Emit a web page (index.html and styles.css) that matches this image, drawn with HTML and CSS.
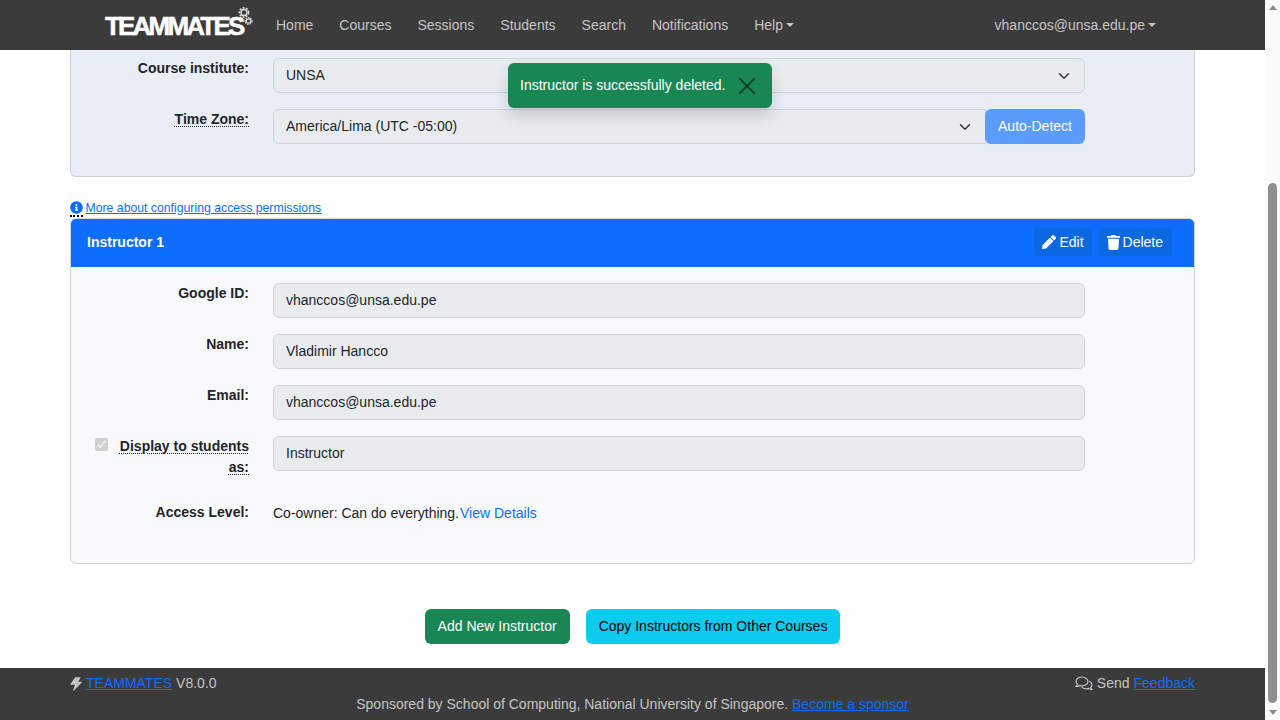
FILE: index.html
```html
<!DOCTYPE html>
<html lang="en">
<head>
  <meta charset="UTF-8">
  <meta name="viewport" content="width=device-width, initial-scale=1.0">
  <title>TEAMMATES - Edit Course</title>
  <link rel="stylesheet" href="styles.css">
</head>
<body>
  <div class="page">
    <nav class="navbar">
      <a class="brand" href="#">
        <span class="brand-text">TEAMMATES</span>
        <svg class="brand-gears" viewBox="0 0 18 22" width="18" height="22">
          <circle class="gear-teeth" cx="6" cy="6.500" r="4.600" />
          <circle class="gear-ring" cx="6" cy="6.500" r="3" />
          <circle class="gear-teeth small" cx="10.500" cy="15" r="3.400" />
          <circle class="gear-ring small" cx="10.500" cy="15" r="2.200" />
        </svg>
      </a>
      <ul class="nav-links">
        <li><a href="#">Home</a></li>
        <li><a href="#">Courses</a></li>
        <li><a href="#">Sessions</a></li>
        <li><a href="#">Students</a></li>
        <li><a href="#">Search</a></li>
        <li><a href="#">Notifications</a></li>
        <li><a class="caret" href="#">Help</a></li>
      </ul>
      <a class="nav-user caret" href="#">vhanccos@unsa.edu.pe</a>
    </nav>

    <main class="content">
      <section class="course-panel">
        <div class="form-row">
          <label class="row-label">Course institute:</label>
          <select class="field" disabled><option>UNSA</option></select>
        </div>
        <div class="form-row">
          <label class="row-label"><span class="hint">Time Zone:</span></label>
          <div class="input-group">
            <select class="field" disabled><option>America/Lima (UTC -05:00)</option></select>
            <button class="btn btn-detect" type="button" disabled>Auto-Detect</button>
          </div>
        </div>
      </section>

      <p class="help-line">
        <span class="info-wrap">
          <svg class="info-icon" viewBox="0 0 512 512" width="13" height="13"><path d="M256 8C119.043 8 8 119.083 8 256c0 136.997 111.043 248 248 248s248-111.003 248-248C504 119.083 392.957 8 256 8zm0 110c23.196 0 42 18.804 42 42s-18.804 42-42 42-42-18.804-42-42 18.804-42 42-42zm56 254c0 6.627-5.373 12-12 12h-88c-6.627 0-12-5.373-12-12v-24c0-6.627 5.373-12 12-12h12v-64h-12c-6.627 0-12-5.373-12-12v-24c0-6.627 5.373-12 12-12h64c6.627 0 12 5.373 12 12v100h12c6.627 0 12 5.373 12 12v24z"/></svg>
        </span>
        <a href="#">More about configuring access permissions</a>
      </p>

      <section class="instructor-card">
        <header class="card-head">
          <strong>Instructor 1</strong>
          <div class="card-actions">
            <button class="btn btn-head" type="button">
              <svg viewBox="0 0 512 512" width="14" height="14"><path d="M497.9 142.1l-46.1 46.1c-4.7 4.7-12.3 4.7-17 0l-111-111c-4.7-4.7-4.7-12.3 0-17l46.1-46.1c18.7-18.7 49.1-18.7 67.9 0l60.1 60.1c18.8 18.7 18.8 49.1 0 67.9zM284.2 99.8L21.6 362.4.4 483.9c-2.9 16.4 11.4 30.6 27.8 27.8l121.5-21.3 262.6-262.6c4.7-4.7 4.7-12.3 0-17l-111-111c-4.8-4.7-12.4-4.7-17.1 0z"/></svg>
              Edit
            </button>
            <button class="btn btn-head btn-delete" type="button">
              <svg viewBox="0 0 448 512" width="13" height="15"><path d="M432 32H312l-9.4-18.7A24 24 0 0 0 281.1 0H166.8a23.72 23.72 0 0 0-21.4 13.3L136 32H16A16 16 0 0 0 0 48v32a16 16 0 0 0 16 16h416a16 16 0 0 0 16-16V48a16 16 0 0 0-16-16zM53.2 467a48 48 0 0 0 47.9 45h245.8a48 48 0 0 0 47.9-45L416 128H32z"/></svg>
              Delete
            </button>
          </div>
        </header>
        <div class="card-body">
          <div class="form-row">
            <label class="row-label">Google ID:</label>
            <input class="field" type="text" value="vhanccos@unsa.edu.pe" disabled>
          </div>
          <div class="form-row">
            <label class="row-label">Name:</label>
            <input class="field" type="text" value="Vladimir Hancco" disabled>
          </div>
          <div class="form-row">
            <label class="row-label">Email:</label>
            <input class="field" type="text" value="vhanccos@unsa.edu.pe" disabled>
          </div>
          <div class="form-row">
            <label class="row-label row-check">
              <input class="check" type="checkbox" checked disabled>
              <span class="check-text"><span class="hint">Display to students as:</span></span>
            </label>
            <input class="field" type="text" value="Instructor" disabled>
          </div>
          <div class="form-row row-access">
            <label class="row-label">Access Level:</label>
            <div class="access-text">Co-owner: Can do everything.<a href="#">View Details</a></div>
          </div>
        </div>
      </section>

      <div class="page-actions">
        <button class="btn btn-green" type="button">Add New Instructor</button>
        <button class="btn btn-cyan" type="button">Copy Instructors from Other Courses</button>
      </div>
    </main>

    <footer class="footer">
      <div class="footer-top">
        <div class="footer-left">
          <svg viewBox="0 0 12 14" width="12" height="14"><path d="M5.200 0.300h5.600L8.200 4.800h3.300c.4 0 .6.400.3.700L4 13.600c-.4.400-1 0-.8-.5L5 7.800H1.300c-.6 0-1-.5-.7-1z"/></svg>
          <a href="#">TEAMMATES</a> V8.0.0
        </div>
        <div class="footer-right">
          <svg class="chat-icon" viewBox="0 0 18 15" width="18" height="15">
            <path d="M7 1C3.700 1 1 3 1 5.500c0 1.100.5 2.100 1.400 2.900C2.100 9.300 1.500 10 1 10.500c1.300 0 2.600-.5 3.500-1.100.8.300 1.600.4 2.500.4 3.300 0 6-2 6-4.300S10.300 1 7 1z"/>
            <path d="M14.300 5.200c1.600.7 2.700 2 2.700 3.500 0 1-.5 2-1.400 2.700.2.800.8 1.500 1.300 2-1.300 0-2.500-.4-3.400-1-.8.300-1.600.4-2.500.4-1.800 0-3.400-.6-4.400-1.600"/>
          </svg>
          Send <a href="#">Feedback</a>
        </div>
      </div>
      <div class="footer-sponsor">Sponsored by School of Computing, National University of Singapore. <a href="#">Become a sponsor</a></div>
    </footer>

    <div class="toast">
      <span>Instructor is successfully deleted.</span>
      <svg class="toast-close" viewBox="0 0 16 16" width="18" height="18"><path d="M1 1l14 14M15 1L1 15"/></svg>
    </div>
  </div>

  <div class="scrollbar">
    <span class="arrow arrow-up"></span>
    <div class="track"><div class="thumb"></div></div>
    <span class="arrow arrow-down"></span>
  </div>
</body>
</html>
```

FILE: styles.css
```css
* { box-sizing: border-box; }
html, body { height: 100%; }
body {
  margin: 0; display: flex; overflow: hidden;
  font-family: "Liberation Sans", Arial, sans-serif;
  font-size: 14px; line-height: 21px; color: #212529; background: #fff;
}
a { color: #0d6efd; }

.page {
  position: relative; width: 1265px; height: 720px;
  display: flex; flex-direction: column; overflow: hidden;
}

/* navbar */
.navbar {
  height: 50px; flex: none; display: flex; align-items: center;
  padding: 0 109px 0 105px; background: #3b3b3b;
}
.brand {
  position: relative; display: block; width: 171px;
  height: 50px; text-decoration: none;
}
.brand-text {
  display: block; margin-top: 13px; font-size: 26px; line-height: 26px; font-weight: 700;
  letter-spacing: -2.800px; color: #fff; -webkit-text-stroke: 0.5px #fff;
}
.brand-gears { position: absolute; left: 133px; top: 6px; }
.gear-teeth { fill: none; stroke: #dcdcdc; stroke-width: 1.600; stroke-dasharray: 2 1.300; }
.gear-ring { fill: none; stroke: #dcdcdc; stroke-width: 1.400; }
.gear-teeth.small { stroke-dasharray: 1.500 1; stroke-width: 1.300; }
.gear-ring.small { stroke-width: 1.200; }
.nav-links { display: flex; gap: 26px; margin: 0; padding: 0; list-style: none; }
.navbar a { color: #c4c4c4; text-decoration: none; }
.nav-user { margin-left: auto; }
.caret::after {
  content: ""; display: inline-block; margin-left: 3px; vertical-align: 3px;
  border-top: 4px solid; border-left: 4px solid transparent; border-right: 4px solid transparent;
}

/* main column */
.content { flex: 1; padding: 0 70px; min-height: 0; }
.course-panel {
  height: 127px; padding: 8px 0 0; background: #e9edf6;
  border: 1px solid #ced4da; border-top: 0; border-radius: 0 0 6px 6px;
}
.form-row {
  display: grid; grid-template-columns: 178px 812px; column-gap: 24px;
  margin-bottom: 16px;
}
.row-label { font-weight: 700; text-align: right; }
.hint { text-decoration: underline dotted #212529 1px; text-underline-offset: 2px; }
.field {
  width: 100%; height: 35px; padding: 5px 12px 7px; font: inherit; color: #212529; opacity: 1;
  background-color: #e9ecef; border: 1px solid #ced4da; border-radius: 6px;
}
select.field {
  appearance: none; padding: 6px 36px 6px 12px;
  background-image: url("data:image/svg+xml,%3csvg xmlns='http://www.w3.org/2000/svg' viewBox='0 0 16 16'%3e%3cpath fill='none' stroke='%23343a40' stroke-linecap='round' stroke-linejoin='round' stroke-width='2' d='m2 5 6 6 6-6'/%3e%3c/svg%3e");
  background-repeat: no-repeat; background-position: right 14px center; background-size: 12px 12px;
}
.input-group { display: flex; }
.input-group .field { flex: 1; border-radius: 6px 0 0 6px; }
.btn {
  font: inherit; height: 35px; padding: 0 12px; border: 1px solid transparent;
  border-radius: 6px; color: #fff;
}
.btn-detect { width: 100px; flex: none; background: #5a9bfc; margin-left: -1px; }

.help-line {
  height: 17px; margin: 23px 0 0; font-size: 12.250px; line-height: 17px;
  display: flex; align-items: flex-start; gap: 3px;
}
.info-wrap { height: 17px; padding-top: 1px; display: flex; border-bottom: 2px dotted #000; }
.info-icon { fill: #0d6efd; flex: none; }
.help-line a { margin-left: -0.500px; }

.instructor-card {
  margin-top: 1px; height: 346px; background: #f8f9fa;
  border: 1px solid #ced4da; border-radius: 6px; overflow: hidden;
}
.card-head {
  height: 48px; display: flex; align-items: center; justify-content: space-between;
  padding: 0 22px 2px 16px; background: #0d6efd; color: #fff;
}
.card-actions { display: flex; gap: 7px; }
.btn-head {
  height: 28px; padding: 0 7px; background: #0b68e3; border-radius: 4px;
  display: flex; align-items: center; gap: 3px;
}
.btn-delete { padding-right: 8px; }
.btn-head svg { fill: #fff; }
.card-body { padding-top: 16px; }
.row-check { display: flex; align-items: flex-start; padding-left: 24px; }
.check { width: 13px; height: 13px; margin: 2px 0 0; flex: none; accent-color: #c8c8c8; }
.check-text { flex: 1; }
.row-access { margin-top: 25px; margin-bottom: 0; }
.row-access .row-label { margin-top: -1px; }
.access-text a { margin-left: 1px; text-decoration: none; }

.page-actions { display: flex; justify-content: center; gap: 16px; margin-top: 45px; }
.btn-green { background: #198754; }
.btn-cyan { background: #0dcaf0; color: #000; }

/* footer */
.footer { height: 52px; flex: none; padding: 5px 70px 0; background: #3b3b3b; color: #c4c4c4; }
.footer-top { display: flex; justify-content: space-between; }
.footer-left, .footer-right { display: flex; align-items: center; gap: 4px; }
.footer-left svg { fill: #c4c4c4; }
.chat-icon { fill: none; stroke: #c4c4c4; stroke-width: 1.200; }
.footer-sponsor { text-align: center; }

/* toast over the page */
.toast {
  position: absolute; left: 508px; top: 63px; width: 264px; height: 45px;
  display: flex; align-items: center; justify-content: space-between;
  padding: 0 16px 0 12px; background: #198754; color: #fff;
  border-radius: 6px; box-shadow: 0 8px 16px rgba(0,0,0,0.15);
}
.toast-close { fill: none; stroke: #0e3d28; stroke-width: 1.600; }

/* drawn scrollbar, the page photo is scrolled part way */
.scrollbar { width: 15px; height: 720px; flex: none; display: flex; flex-direction: column; background: #fbfbfb; }
.track { flex: 1; padding-top: 168px; padding-bottom: 2px; }
.thumb { width: 9px; height: 100%; margin-left: 3px; background: #8f8f8f; border-radius: 5px; }
.arrow { height: 15px; flex: none; display: flex; align-items: center; justify-content: center; }
.arrow::before { content: ""; border-left: 4.500px solid transparent; border-right: 4.500px solid transparent; }
.arrow-up::before { border-bottom: 5px solid #8a8a8a; }
.arrow-down::before { border-top: 5px solid #8a8a8a; }
```
